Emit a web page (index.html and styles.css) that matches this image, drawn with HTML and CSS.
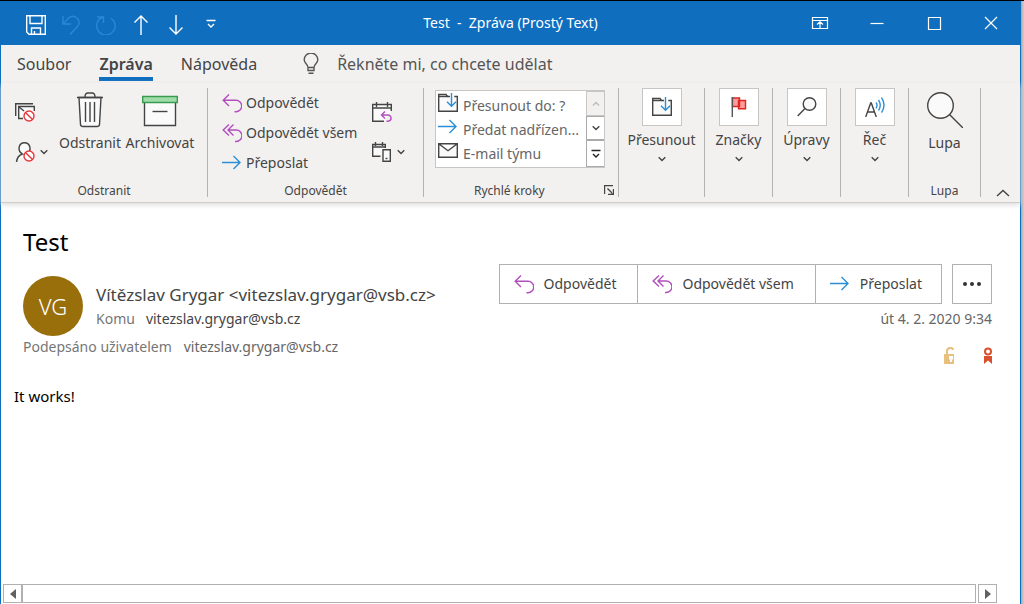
FILE: index.html
```html
<!DOCTYPE html>
<html lang="cs">
<head>
<meta charset="utf-8">
<title>Test - Zpráva (Prostý Text)</title>
<link rel="stylesheet" href="styles.css">
</head>
<body>
<svg class="defs" aria-hidden="true">
  <symbol id="reply" viewBox="0 0 20 20"><path d="M7 1.500 1.200 7.300 7 13.100M1.200 7.300H14a5.100 5.100 0 0 1 0 11.400h-1.500"/></symbol>
  <symbol id="reply-all" viewBox="0 0 20 20"><path d="M7 1.500 1.200 7 7 12.500M11.500 1.500 6 7l5.500 5.500M6 7h8.200a5.300 5.300 0 0 1 0 11.500H13"/></symbol>
  <symbol id="forward" viewBox="0 0 20 20"><path d="M0 9.500h18M11.500 3l6.500 6.500L11.500 16"/></symbol>
  <symbol id="chevron" viewBox="0 0 8 6"><path d="m.7 1.200 3.300 3.300 3.300-3.300"/></symbol>
  <symbol id="move" viewBox="0 0 20 20"><path fill="#fafafa" stroke="#444" d="M12 3.500H9.500L8 1.500H.7v16.800h18.600V3.500h-3"/><path stroke="#444" d="M1 3.500h8.500"/><path stroke="#2b8fd6" d="M13.500 0v13M9 8.800l4.500 4.400L18 8.800"/></symbol>
  <symbol id="ban" viewBox="0 0 12 12"><circle cx="6" cy="6" r="5" fill="#fff" stroke="#e8383d"/><path stroke="#e8383d" d="m2.500 2.500 7 7"/></symbol>
</svg>
<div class="window">
  <header class="titlebar">
    <div class="quick">
      <button class="tb" aria-label="Uložit"><svg viewBox="0 0 20 20"><path d="M.7.700h18.600v18.600H3L.7 17zM4 1v7.500h12V1M5.500 19v-6h9v6M8.500 16v3"/></svg></button>
      <button class="tb dim" aria-label="Zpět" disabled><svg viewBox="0 0 20 20"><path d="M2 1v8h8M2 9l5-5.500C10 .500 14 .500 16.500 3.500s2 6-.5 8.500l-7 7.500"/></svg></button>
      <button class="tb dim" aria-label="Znovu" disabled><svg viewBox="0 0 20 20"><path d="M1 2h6.500v6M7.500 2C3 3.500.7 7 .7 10.500a9.200 9.200 0 1 0 14-7.500"/></svg></button>
      <button class="tb" aria-label="Předchozí položka"><svg viewBox="0 0 20 20"><path d="M10 20V1M3.500 7.500 10 1l6.500 6.500"/></svg></button>
      <button class="tb" aria-label="Další položka"><svg viewBox="0 0 20 20"><path d="M10 0v19M3.500 12.500 10 19l6.500-6.500"/></svg></button>
      <button class="tb" aria-label="Přizpůsobit panel"><svg viewBox="0 0 20 20"><path d="M5.500 5.500h9M7 9l3 3 3-3"/></svg></button>
    </div>
    <div class="title">Test&nbsp; -&nbsp; Zpráva (Prostý Text)</div>
    <div class="controls">
      <button class="wb" aria-label="Zobrazení pásu karet"><svg viewBox="0 0 18 18"><path d="M1.500 3.500h15v11h-15zM1.500 6.500h15M9 14V8M6 10.500 9 7.700l3 2.800"/></svg></button>
      <button class="wb" aria-label="Minimalizovat"><svg viewBox="0 0 18 18"><path d="M2.500 9.500h13"/></svg></button>
      <button class="wb" aria-label="Maximalizovat"><svg viewBox="0 0 18 18"><path d="M3.500 3.500h12v12h-12z"/></svg></button>
      <button class="wb" aria-label="Zavřít"><svg viewBox="0 0 18 18"><path d="m3 3 12 12M15 3 3 15"/></svg></button>
    </div>
  </header>

  <nav class="tabs">
    <button class="tab">Soubor</button>
    <button class="tab active">Zpráva</button>
    <button class="tab">Nápověda</button>
    <label class="tell"><svg viewBox="0 0 16 22"><path d="M5 14.500C5 11 1.200 10.500 1.200 6.800a6.500 6.500 0 0 1 13.600 0c0 3.700-3.800 4.200-3.800 7.700zM5 14.500v3h6v-3M5.500 20.300h5"/></svg>
      <input type="text" placeholder="Řekněte mi, co chcete udělat" aria-label="Řekněte mi, co chcete udělat"></label>
  </nav>

  <section class="ribbon">
    <div class="group g-delete">
      <div class="tools">
        <div class="minis">
          <button class="mini" aria-label="Ignorovat"><svg class="i20" viewBox="0 0 20 20"><path stroke="#444" fill="none" d="M.7 14V1.700H18"/><path stroke="#444" fill="#fafafa" d="M8 16.500H3.700v-12h15.600V9"/><path stroke="#444" d="m4 5 5 4"/><use href="#ban" x="8" y="8" width="12" height="12"/></svg></button>
          <button class="mini" aria-label="Nevyžádaná pošta"><svg class="i20" viewBox="0 0 20 20"><path stroke="#444" fill="#fafafa" d="M1.500 20c.5-5 3-7 6-8C2 9 3.500.700 9.500.700S17 9 12 12"/><use href="#ban" x="8" y="8" width="12" height="12"/></svg><svg class="chev"><use href="#chevron"/></svg></button>
        </div>
        <button class="big"><svg class="i36" viewBox="0 0 36 36"><path stroke="#444" fill="#fafafa" d="M7 5.500h22l-1.500 27q-.2 2-2.500 2H11q-2.300 0-2.500-2z"/><path stroke="#444" fill="none" d="M5 5.500h26M13 5q0-4 3-4h4q3 0 3 4M13.500 10v20M18 10v20M22.500 10v20"/></svg>Odstranit</button>
        <button class="big"><svg class="i36" viewBox="0 0 36 36"><path stroke="#444" fill="#fafafa" d="M2.500 10h31v23.500h-31z"/><path stroke="#3a9a50" fill="#a0dcaa" d="M.7 4.500h34.600v6H.7z"/><path stroke="#444" d="M10.500 19.500h15"/></svg>Archivovat</button>
      </div>
      <div class="caption">Odstranit</div>
    </div>
    <div class="group g-reply">
      <div class="tools">
        <div class="rows">
          <button class="row"><svg class="i20 purple"><use href="#reply"/></svg>Odpovědět</button>
          <button class="row"><svg class="i20 purple"><use href="#reply-all"/></svg>Odpovědět všem</button>
          <button class="row"><svg class="i20 blue"><use href="#forward"/></svg>Přeposlat</button>
        </div>
        <div class="minis">
          <button class="mini" aria-label="Odpovědět schůzkou"><svg class="i20" viewBox="0 0 20 20"><path stroke="#444" fill="#fafafa" d="M12 19.300H.7V2.500h18.600V9M.7 6h18.600M4.500 0v5M15.500 0v5"/><path fill="none" stroke="#b14fbd" d="M13 9.500 9.500 13l3.500 3.500M9.500 13H16a3 3 0 0 1 0 6.200h-1.500"/></svg></button>
          <button class="mini" aria-label="Další odpovědi"><svg class="i20" viewBox="0 0 20 20"><path stroke="#444" fill="#fafafa" d="M8.500 14.300H.7V2.500h12.600V6M.7 5h12.600M3.500 0v4M10.500 0v4M11 7.700h7.300v11.600H11z"/><path stroke="#444" d="M13.500 16.500h2"/></svg><svg class="chev"><use href="#chevron"/></svg></button>
        </div>
      </div>
      <div class="caption">Odpovědět</div>
    </div>
    <div class="group g-steps">
      <div class="tools">
        <div class="gallery">
          <div class="steps">
            <button class="step"><svg class="i20"><use href="#move"/></svg>Přesunout do: ?</button>
            <button class="step"><svg class="i20 blue"><use href="#forward"/></svg>Předat nadřízen...</button>
            <button class="step"><svg class="i20" viewBox="0 0 20 20"><path stroke="#444" fill="#fafafa" d="M.7 2.700h18.600v13.600H.7zl9.300 7 9.300-7"/></svg>E-mail týmu</button>
          </div>
          <div class="spin">
            <button class="off" aria-label="Nahoru" disabled><svg class="chev" viewBox="0 0 8 6"><path d="m1 4.500 3-3 3 3"/></svg></button>
            <button aria-label="Dolů"><svg class="chev"><use href="#chevron"/></svg></button>
            <button aria-label="Více"><svg class="more" viewBox="0 0 10 10"><path d="M.5 1.500h9M2 5l3 3 3-3"/></svg></button>
          </div>
        </div>
      </div>
      <div class="caption launch"><span>Rychlé kroky</span><button aria-label="Spravovat rychlé kroky"><svg viewBox="0 0 10 10"><path d="M.5 9V.500H9M3.500 3.500l5 5M9.500 4v5.500H4"/></svg></button></div>
    </div>
    <div class="group g-move"><button class="drop"><span class="tile"><svg class="i20"><use href="#move"/></svg></span>Přesunout<svg class="chev"><use href="#chevron"/></svg></button></div>
    <div class="group g-small"><button class="drop"><span class="tile"><svg class="i20" viewBox="0 0 20 20"><path fill="#ff9a9e" stroke="#d9281e" d="M9.500 3.500h7v8.300h-7zM3.500 1h7v8.500h-7z"/><path stroke="#555" d="M3.300 0v20"/></svg></span>Značky<svg class="chev"><use href="#chevron"/></svg></button></div>
    <div class="group g-small"><button class="drop"><span class="tile"><svg class="i20" viewBox="0 0 20 20"><circle cx="12.500" cy="7" r="6.300" fill="#fafafa" stroke="#444"/><path stroke="#444" d="M8 11.500.7 19"/></svg></span>Úpravy<svg class="chev"><use href="#chevron"/></svg></button></div>
    <div class="group g-small"><button class="drop"><span class="tile"><svg class="i20" viewBox="0 0 20 20"><path fill="none" stroke="#444" d="m.7 20 5-14h.6l5 14M2.500 15h7"/><path fill="none" stroke="#2b8fd6" d="M11 5.500q2 2.500 0 6M13.500 3q3.500 5 0 10.500M16.500.700q5 7 0 15"/></svg></span>Řeč<svg class="chev"><use href="#chevron"/></svg></button></div>
    <div class="group g-zoom">
      <div class="tools"><button class="big"><svg class="i36" viewBox="0 0 36 36"><circle cx="13.500" cy="13.500" r="12.800" fill="#fafafa" stroke="#444"/><path stroke="#444" d="m22.500 22.500 13.500 13.500"/></svg>Lupa</button></div>
      <div class="caption">Lupa</div>
    </div>
    <button class="collapse" aria-label="Sbalit pás karet"><svg viewBox="0 0 14 8"><path d="m1 7 6-5.500L13 7"/></svg></button>
  </section>

  <main class="message">
    <h1>Test</h1>
    <div class="head">
      <div class="sender">
        <div class="who">
          <div class="avatar">VG</div>
          <div class="lines">
            <div class="name">Vítězslav Grygar &lt;vitezslav.grygar@vsb.cz&gt;</div>
            <div class="to"><span class="muted">Komu</span><span>vitezslav.grygar@vsb.cz</span></div>
          </div>
        </div>
        <div class="signed"><span>Podepsáno uživatelem</span><span class="signer">vitezslav.grygar@vsb.cz</span></div>
      </div>
      <div class="side">
        <div class="actions">
          <div class="joined">
            <button><svg class="i20 purple"><use href="#reply"/></svg>Odpovědět</button>
            <button><svg class="i20 purple"><use href="#reply-all"/></svg>Odpovědět všem</button>
            <button><svg class="i20 blue"><use href="#forward"/></svg>Přeposlat</button>
          </div>
          <button class="dots" aria-label="Další akce"><svg viewBox="0 0 20 6"><circle cx="3" cy="3" r="2"/><circle cx="10" cy="3" r="2"/><circle cx="17" cy="3" r="2"/></svg></button>
        </div>
        <time class="date">út 4. 2. 2020 9:34</time>
        <div class="marks">
          <button aria-label="Šifrování"><svg class="lock" viewBox="0 0 10 17"><path fill="#e8bf7d" d="M0 7h2V4.500Q2 0 6 0h1q3 0 3 3H8Q8 2 6.500 2 4 2 4 4.500V7h6v10H0z"/><path fill="#fff" d="M5 9h4v3.500H8V15H6v-2.500H5z"/></svg></button>
          <button aria-label="Podpis"><svg class="seal" viewBox="0 0 8 17"><circle cx="4" cy="4.500" r="3" fill="none" stroke="#d9502e" stroke-width="2"/><path fill="#d9502e" d="M0 9h8v8l-4-3.500L0 17z"/></svg></button>
        </div>
      </div>
    </div>
    <p class="body">It works!</p>
    <div class="scroll">
      <button aria-label="Posunout doleva"><svg viewBox="0 0 6 10"><path d="M6 0v10L0 5z"/></svg></button>
      <div class="track"></div>
      <button class="right" aria-label="Posunout doprava"><svg viewBox="0 0 6 10"><path d="M0 0v10l6-5z"/></svg></button>
    </div>
  </main>
</div>
</body>
</html>
```
FILE: styles.css
```css
* { box-sizing: border-box; }
body {
  margin: 0;
  min-height: 100vh;
  display: flex;
  border-top: 1px solid #000;
  background: linear-gradient(to right, #a8a8a8, #d0d0d0) right / 3px 100% no-repeat;
  font: 14px/20px "Noto Sans", "Open Sans", sans-serif;
  color: #444;
}
button {
  font: inherit;
  color: inherit;
  background: none;
  border: 0;
  padding: 0;
  white-space: nowrap;
}
svg { display: block; flex: none; fill: none; stroke-width: 1.4px; }
.defs { position: absolute; width: 0; height: 0; }
.i20 { width: 20px; height: 20px; }
.i36 { width: 36px; height: 36px; }
.chev { width: 8px; height: 6px; stroke: #444; }
.purple { stroke: #b14fbd; }
.blue { stroke: #2b8fd6; }

.window {
  flex: 1;
  display: flex;
  flex-direction: column;
  margin-right: 3px;
  border: solid #106ebe;
  border-width: 0 1px;
  background: #fff;
}

.titlebar {
  display: grid;
  grid-template-columns: 1fr auto 1fr;
  align-items: center;
  height: 44px;
  background: #106ebe;
  color: #fff;
}
.quick { display: flex; padding-left: 17px; }
.tb { width: 35px; height: 44px; display: grid; place-items: center; }
.tb svg { width: 20px; height: 20px; stroke: #fff; margin-top: 4px; }
.tb.dim svg { stroke: #2b88d8; }
.controls { display: flex; justify-content: flex-end; padding-right: 1px; }
.wb { width: 57px; height: 44px; display: grid; place-items: center; }
.wb svg { width: 18px; height: 18px; stroke: #fff; stroke-width: 1.2px; }

.tabs {
  display: flex;
  align-items: stretch;
  height: 38px;
  gap: 28px;
  padding-left: 16px;
  background: #f3f1f0;
  font-size: 16px;
}
.tab { padding-top: 6px; border-bottom: 4px solid transparent; height: 36px; }
.tab.active { font-weight: 600; border-color: #106ebe; }
.tell { display: flex; flex: 1; align-items: center; gap: 18px; padding-left: 18px; }
.tell svg { width: 16px; height: 22px; stroke: #555; }
.tell input { flex: 1; border: 0; padding: 0; background: none; font: inherit; outline: 0; }
.tell input::placeholder { color: #555; opacity: 1; }

.ribbon {
  display: flex;
  height: 120px;
  padding: 5px 0;
  background: #f3f1f0;
  border-bottom: 1px solid #cfcdcb;
  box-shadow: 0 2px 5px #ddd;
}
.group {
  display: flex;
  flex-direction: column;
  justify-content: space-between;
  border-right: 1px solid #b5b3b1;
}
.g-delete { flex: 0 0 207px; }
.g-reply { flex: 0 0 216px; }
.g-steps { flex: 0 0 195px; }
.g-move { flex: 0 0 86px; }
.g-small { flex: 0 0 68px; }
.g-zoom { flex: 0 0 72px; }
.tools { display: flex; height: 94px; }
.caption { text-align: center; font-size: 12px; line-height: 16px; height: 14px; }
.g-delete .tools { padding-left: 14px; }
.g-reply .tools { padding-left: 14px; justify-content: space-between; padding-right: 18px; }
.g-steps .tools { padding: 2px 13px 0 11px; }
.g-zoom .tools { justify-content: center; }
.big { display: flex; flex-direction: column; align-items: center; gap: 5px; padding-top: 4px; }
.g-delete .big { width: 68px; }
.g-delete .big:last-child { width: 72px; }
.minis { display: flex; flex-direction: column; gap: 20px; padding-top: 14px; }
.g-delete .minis { width: 41px; }
.mini { display: flex; align-items: center; gap: 5px; }
.rows { display: flex; flex-direction: column; }
.row { display: flex; align-items: center; gap: 4px; height: 30px; }

.gallery { display: flex; flex: 1; height: 78px; background: #fff; border: 1px solid #c8c6c4; }
.steps { flex: 1; padding-top: 1px; min-width: 0; }
.step { display: flex; gap: 5px; height: 24px; padding-left: 2px; line-height: 28px; color: #666; }
.step svg { margin-top: 1px; }
.spin { width: 18px; display: grid; grid-template-rows: 25px 24px 27px; }
.spin button { border: 1px solid #aaa; border-right: 0; display: grid; place-items: center; }
.spin .off { background: #f3f1f0; border-color: #c8c6c4; }
.spin .off svg { stroke: #bbb; }
.more { width: 10px; height: 10px; stroke: #222; }
.launch { display: flex; justify-content: space-between; padding: 0 4px 0 50px; }
.launch svg { width: 10px; height: 10px; stroke: #444; }

.drop { display: flex; flex-direction: column; align-items: center; }
.tile { width: 40px; height: 38px; margin-bottom: 4px; display: grid; place-items: center; background: #fff; border: 1px solid #c8c6c4; }
.drop .chev { margin-top: 6px; }
.collapse { margin-left: auto; align-self: flex-end; padding: 0 10px 0; }
.collapse svg { width: 14px; height: 8px; stroke: #444; }

.message { flex: 1; display: flex; flex-direction: column; }
h1 { margin: 19px 0 0; padding-left: 22px; font-size: 24px; line-height: 40px; font-weight: 400; color: #000; }
.head { display: flex; justify-content: space-between; padding: 2px 28px 0 22px; }
.who { display: flex; gap: 13px; padding-top: 12px; }
.avatar { width: 60px; height: 60px; border-radius: 50%; display: grid; place-items: center; background: #986f0b; color: #fff; font-size: 22px; font-weight: 300; }
.lines { padding-top: 6px; }
.name { font-size: 17px; line-height: 26px; }
.to { display: flex; gap: 11px; line-height: 22px; }
.muted, .signed { color: #767676; }
.signed { display: flex; gap: 12px; line-height: 22px; }
.side { display: flex; flex-direction: column; align-items: flex-end; }
.actions { display: flex; gap: 10px; }
.joined { display: flex; border: 1px solid #b3b1af; }
.joined button { display: flex; align-items: center; gap: 10px; height: 38px; padding: 0 21px 0 14px; border-right: 1px solid #b3b1af; }
.joined button:last-child { border-right: 0; padding-right: 19px; }
.dots { width: 40px; display: grid; place-items: center; border: 1px solid #b3b1af; }
.dots svg { width: 20px; height: 6px; fill: #333; }
.date { margin-top: 5px; color: #666; }
.marks { display: flex; gap: 30px; margin-top: 18px; }
.lock { width: 10px; height: 17px; }
.seal { width: 8px; height: 17px; }
.signer { color: #666; }
.body { margin: 22px 0 0; padding-left: 13px; font-size: 15px; color: #000; }
.scroll { margin-top: auto; display: flex; padding: 0 23px 1px 2px; height: 20px; }
.scroll button { width: 19px; border: 1px solid #b0b0b0; display: grid; place-items: center; }
.scroll .right { margin-left: 2px; }
.scroll svg { width: 6px; height: 10px; fill: #606060; }
.track { flex: 1; border: 1px solid #b0b0b0; }
```
